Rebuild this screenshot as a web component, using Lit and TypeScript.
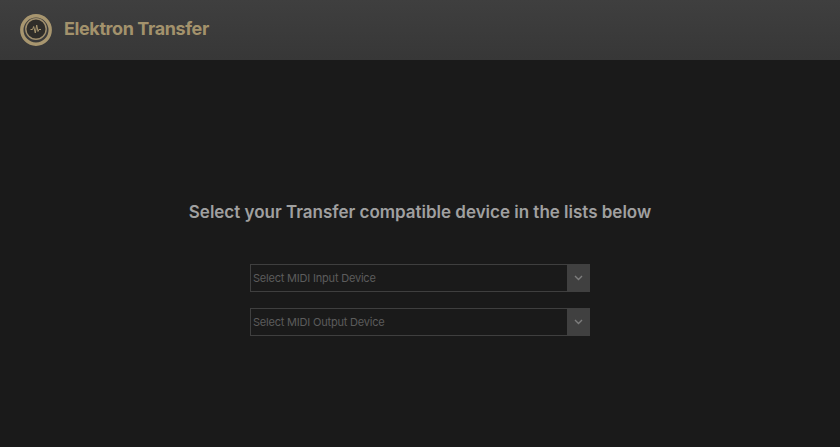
import { LitElement, html, css } from "lit";
import { customElement } from "lit/decorators.js";

@customElement("app-root")
export class AppRoot extends LitElement {
  static styles = css`
    :host { display: block; width: 840px; height: 447px; background: #1a1a1a; font-family: Inter, "Liberation Sans", sans-serif; overflow: hidden; }
    .bar { height: 60px; box-sizing: border-box; background: linear-gradient(#3f3f3f, #373737); display: flex; align-items: center; padding-left: 20px; gap: 12px; }
    .logo { width: 32px; height: 32px; display: block; }
    .brand { color: #a3926c; font-size: 18px; line-height: 18px; font-weight: 700; letter-spacing: -0.4px; margin-top: -2px; }
    .main { display: flex; flex-direction: column; align-items: center; padding-top: 141px; }
    h1 { margin: 0; color: #a0a0a0; font-size: 17px; line-height: 22px; font-weight: 600; letter-spacing: -0.01px; }
    .selects { display: flex; flex-direction: column; gap: 16px; margin-top: 41px; }
    .sel { width: 340px; height: 28px; box-sizing: border-box; border: 1px solid #3f3f3f; display: flex; align-items: center; justify-content: space-between; }
    .lbl { padding-left: 2px; color: #5c5c5c; font-size: 11px; letter-spacing: -0.2px; }
    .arrow { width: 23px; height: 28px; margin: -1px; background: #404040; display: flex; align-items: center; justify-content: center; }
    .arrow svg { width: 9px; height: 6px; display: block; }
  `;
  render() {
    const arrow = html`<div class="arrow"><svg viewBox="0 0 9 6"><path d="M1 1 4.5 4.5 8 1" fill="none" stroke="#7d7d7d" stroke-width="1.4"/></svg></div>`;
    return html`
      <div class="bar">
        <svg class="logo" viewBox="0 0 32 32">
          <circle cx="16" cy="16" r="14.2" fill="none" stroke="#a8966f" stroke-width="3.4"/>
          <circle cx="16" cy="15" r="10.2" fill="#2f2d29" stroke="#a08f6d" stroke-width="1.4"/>
          <path d="M10.5 15.5h2l1.2-3 1.6 6.5 1.4-8 1.3 6.5.9-2h2.1" fill="none" stroke="#a8966f" stroke-width="1"/>
        </svg>
        <span class="brand">Elektron Transfer</span>
      </div>
      <div class="main">
        <h1>Select your Transfer compatible device in the lists below</h1>
        <div class="selects">
          <div class="sel"><span class="lbl">Select MIDI Input Device</span>${arrow}</div>
          <div class="sel"><span class="lbl">Select MIDI Output Device</span>${arrow}</div>
        </div>
      </div>
    `;
  }
}
